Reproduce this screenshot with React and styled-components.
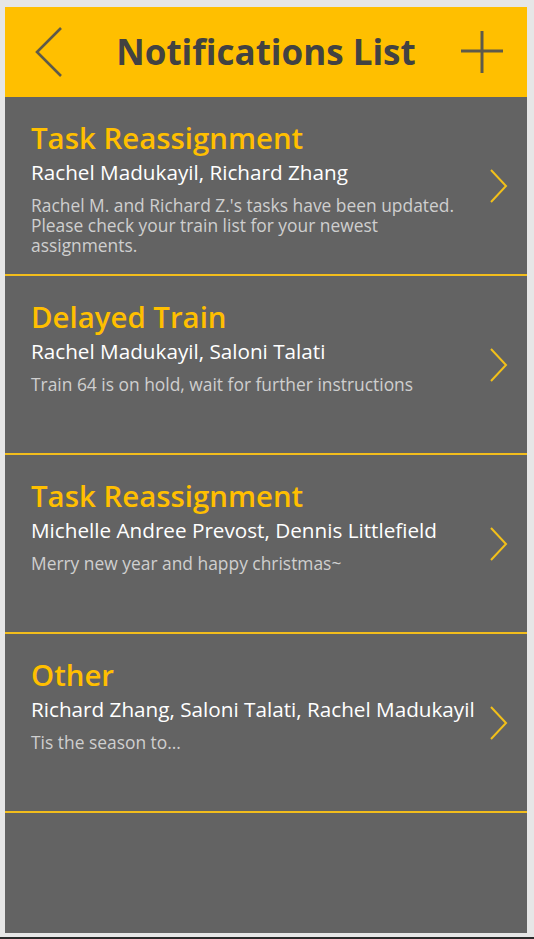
import React from "react";
import styled, { createGlobalStyle } from "styled-components";

const GlobalStyle = createGlobalStyle`
  html, body { margin: 0; padding: 0; }
  body {
    background: #e6e6e6;
    font-family: "Open Sans", "Liberation Sans", sans-serif;
    width: 534px;
    height: 939px;
    overflow: hidden;
  }
`;

const Page = styled.div`
  width: 534px;
  height: 939px;
  display: flex;
  flex-direction: column;
  box-sizing: border-box;
  padding: 7px 7px 0 5px;
`;

const Screen = styled.div`
  width: 522px;
  height: 926px;
  background: #636363;
  display: flex;
  flex-direction: column;
`;

const Header = styled.header`
  height: 90px;
  flex-shrink: 0;
  background: #ffbf00;
  display: grid;
  grid-template-columns: 90px 1fr 90px;
  align-items: center;
`;

const IconButton = styled.button`
  border: none;
  background: transparent;
  padding: 0;
  width: 90px;
  height: 90px;
  display: flex;
  align-items: center;
  justify-content: center;
  cursor: pointer;
`;

const Title = styled.h1`
  margin: 0;
  text-align: center;
  font-family: "Open Sans", sans-serif;
  font-weight: 700;
  font-size: 35px;
  color: #424242;
  line-height: 1;
  padding-bottom: 2px;
`;

const List = styled.div`
  display: flex;
  flex-direction: column;
`;

const Item = styled.div`
  height: 179px;
  box-sizing: border-box;
  border-bottom: 2px solid #f2bd1c;
  display: flex;
  align-items: flex-start;
  padding: 0 0 0 26px;
`;

const Body = styled.div`
  flex: 1;
  display: flex;
  flex-direction: column;
  padding-top: 23px;
  min-width: 0;
`;

const ItemTitle = styled.div`
  font-weight: 600;
  font-size: 29.4px;
  line-height: 36px;
  color: #ffbf00;
`;

const Names = styled.div`
  font-weight: 400;
  font-size: 20.7px;
  line-height: 32px;
  color: #ffffff;
  white-space: nowrap;
`;

const Desc = styled.div`
  margin-top: 7px;
  font-size: 17.4px;
  line-height: 20px;
  color: #cfcfcf;
  max-width: 440px;
`;

const Chevron = styled.div`
  width: 44px;
  height: 177px;
  flex-shrink: 0;
  box-sizing: border-box;
  padding-left: 6px;
  display: flex;
  align-items: center;
  justify-content: flex-start;
`;

const BottomBar = styled.div`
  height: 2px;
  margin: 4px -7px 0 -5px;
  background: #2a2a2a;
`;

const items = [
  {
    title: "Task Reassignment",
    names: "Rachel Madukayil, Richard Zhang",
    desc: "Rachel M. and Richard Z.'s tasks have been updated. Please check your train list for your newest assignments.",
  },
  {
    title: "Delayed Train",
    names: "Rachel Madukayil, Saloni Talati",
    desc: "Train 64 is on hold, wait for further instructions",
  },
  {
    title: "Task Reassignment",
    names: "Michelle Andree Prevost, Dennis Littlefield",
    desc: "Merry new year and happy christmas~",
  },
  {
    title: "Other",
    names: "Richard Zhang, Saloni Talati, Rachel Madukayil",
    desc: "Tis the season to...",
  },
];

export default function App() {
  return (
    <>
      <GlobalStyle />
      <Page>
        <Screen>
          <Header>
            <IconButton aria-label="Back">
              <svg width="30" height="52" viewBox="0 0 30 52">
                <polyline points="26,2 2,26 26,50" fill="none" stroke="#5e5a4a" strokeWidth="2.6" />
              </svg>
            </IconButton>
            <Title>Notifications List</Title>
            <IconButton aria-label="Add">
              <svg width="44" height="44" viewBox="0 0 44 44">
                <line x1="22" y1="1" x2="22" y2="43" stroke="#5e5a4a" strokeWidth="3" />
                <line x1="1" y1="21" x2="43" y2="21" stroke="#5e5a4a" strokeWidth="3" />
              </svg>
            </IconButton>
          </Header>
          <List>
            {items.map((it, i) => (
              <Item key={i}>
                <Body>
                  <ItemTitle>{it.title}</ItemTitle>
                  <Names>{it.names}</Names>
                  <Desc>{it.desc}</Desc>
                </Body>
                <Chevron>
                  <svg width="20" height="34" viewBox="0 0 20 34">
                    <polyline points="2,1 17,17 2,33" fill="none" stroke="#f2c01a" strokeWidth="2" />
                  </svg>
                </Chevron>
              </Item>
            ))}
          </List>
        </Screen>
        <BottomBar />
      </Page>
    </>
  );
}
